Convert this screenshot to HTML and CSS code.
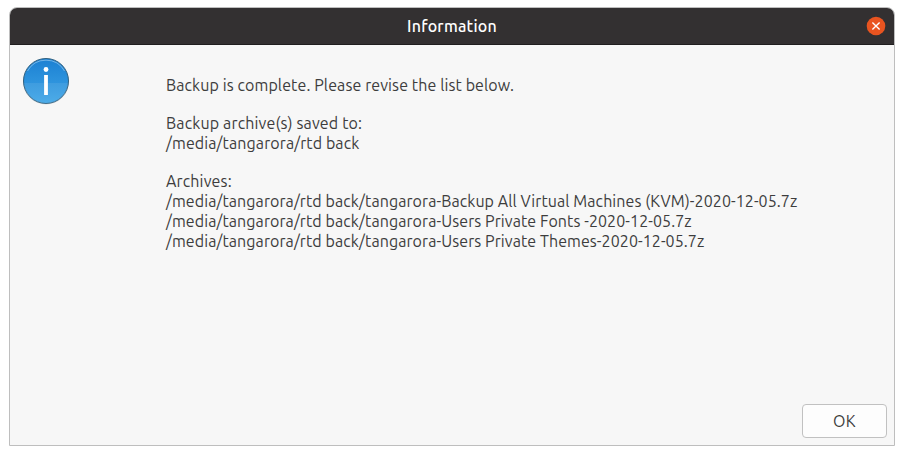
FILE: index.html
```html
<!DOCTYPE html>
<html lang="en">
<head>
<meta charset="utf-8">
<title>Information</title>
<link rel="stylesheet" href="styles.css">
</head>
<body>
<main class="dialog">
  <header class="titlebar">
    <h1 class="title">Information</h1>
    <button class="close" aria-label="Close">
      <svg width="20" height="20" viewBox="0 0 20 20"><circle cx="10" cy="10" r="9.3" fill="#e95420"/><path d="M6.4 6.4l7.2 7.2M13.6 6.4l-7.2 7.2" stroke="#fff" stroke-width="1.35" fill="none"/></svg>
    </button>
  </header>
  <section class="content">
    <svg class="info" width="48" height="48" viewBox="0 0 48 48">
      <defs><linearGradient id="disc" x1="0" y1="0" x2="0" y2="1"><stop offset="0" stop-color="#1b80d3"/><stop offset="1" stop-color="#3ea5e6"/></linearGradient></defs>
      <circle cx="24" cy="24.6" r="23" fill="#000" opacity=".12"/>
      <circle cx="24" cy="24" r="22.5" fill="url(#disc)" stroke="#32617f"/>
      <path d="M2 26h44a22 22 0 0 1-44 0z" fill="#fff" opacity=".08"/>
      <path d="M5.5 14a21.2 21.2 0 0 1 37 0" fill="none" stroke="#8fc5ee" opacity=".75"/>
      <circle cx="24" cy="12.5" r="2.4" fill="#fff"/>
      <path d="M22.1 18h3.8v20h-3.8z" fill="#fff"/>
    </svg>
    <div class="message">
      <p><span>Backup is complete. Please revise the list below.</span></p>
      <p><span class="wide">Backup archive(s) saved to:</span><span>/media/tangarora/rtd back</span></p>
      <p><span class="wide">Archives:</span><span class="path">/media/tangarora/rtd back/tangarora-Backup All Virtual Machines (KVM)-2020-12-05.7z</span><span class="path">/media/tangarora/rtd back/tangarora-Users Private Fonts -2020-12-05.7z</span><span class="path">/media/tangarora/rtd back/tangarora-Users Private Themes-2020-12-05.7z</span></p>
    </div>
  </section>
  <footer class="actions"><button class="ok">OK</button></footer>
</main>
</body>
</html>
```
FILE: styles.css
```css
* { box-sizing: border-box; }
body { margin: 0; padding: 7px 9px 9px; height: 455px; background: #fff; font-family: Ubuntu, "Noto Sans", sans-serif; font-size: 16px; color: #3d3d3d; overflow: hidden; }
.dialog { width: 886px; height: 439px; display: flex; flex-direction: column; border: 1px solid #bebebe; border-radius: 8px 8px 0 0; background: #f7f7f7; overflow: hidden; }
.titlebar { height: 37px; flex: none; display: grid; grid-template-columns: 1fr auto 1fr; align-items: center; padding-right: 8px; background: #333031; border-bottom: 1px solid #201e1f; }
.title { grid-column: 2; margin: 0 0 0 8px; font-size: 16px; line-height: 20px; font-weight: 500; letter-spacing: .24px; color: #fff; }
.close { justify-self: end; width: 20px; height: 20px; padding: 0; border: 0; background: none; }
.close svg { display: block; }
.content { flex: 1; min-height: 0; display: flex; padding: 12px 12px 0; }
.info { flex: none; }
.message { margin: 18px 0 0 96px; }
.message p { margin: 0 0 18px; }
.message span { display: block; width: max-content; line-height: 20px; letter-spacing: .1px; }
.message .wide { letter-spacing: .15px; }
.message .path { letter-spacing: .08px; }
.actions { flex: none; display: flex; justify-content: flex-end; padding: 0 7px 7px; }
.ok { width: 85px; height: 34px; padding: 0; border: 1px solid #c1c1c1; border-radius: 4px; background: #fdfdfd; color: #3d3d3d; font: inherit; letter-spacing: .3px; }
```
